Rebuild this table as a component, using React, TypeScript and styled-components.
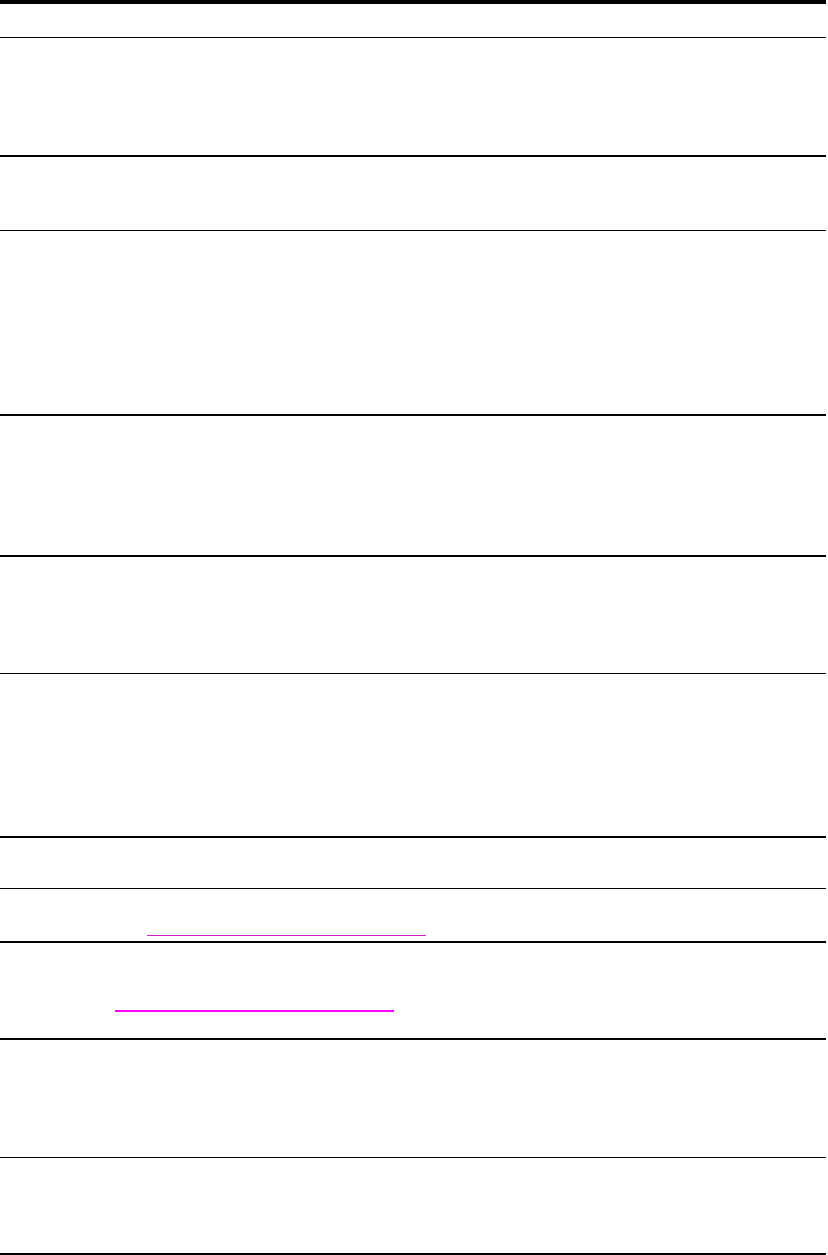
import styled, { createGlobalStyle } from 'styled-components';

const GlobalStyle = createGlobalStyle`
  html, body {
    margin: 0;
    padding: 0;
    background: #ffffff;
    font-family: "Liberation Sans", Arial, sans-serif;
  }
`;

const Sheet = styled.div`
  width: 826px;
  display: flex;
  flex-direction: column;
  border-top: 4px solid #000000;
`;

const Row = styled.div<{ $height: number; $rule: number }>`
  height: ${({ $height }) => $height}px;
  border-bottom: ${({ $rule }) => $rule}px solid #000000;
  display: flex;
  flex-direction: column;
  justify-content: flex-end;
`;

const LinkLine = styled.span<{ $indent: number; $width: number; $weight: number; $color: string; $gap: number }>`
  display: block;
  margin-left: ${({ $indent }) => $indent}px;
  width: ${({ $width }) => $width}px;
  height: 0;
  border-bottom: ${({ $weight }) => $weight}px solid ${({ $color }) => $color};
  margin-bottom: ${({ $gap }) => $gap}px;
`;

const rows = [
  { height: 33, rule: 1 },
  { height: 117, rule: 2 },
  { height: 73, rule: 1 },
  { height: 183, rule: 2 },
  { height: 139, rule: 2 },
  { height: 116, rule: 1 },
  { height: 162, rule: 2 },
  { height: 50, rule: 1 },
  { height: 52, rule: 2, link: { indent: 147, width: 279, weight: 1, color: '#cc22cc', gap: 5 } },
  { height: 95, rule: 2, link: { indent: 115, width: 279, weight: 2, color: '#ff00ff', gap: 26 } },
  { height: 117, rule: 1 },
  { height: 95, rule: 2 },
];

export default function App() {
  return (
    <>
      <GlobalStyle />
      <Sheet>
        {rows.map((r, i) => (
          <Row key={i} $height={r.height} $rule={r.rule}>
            {r.link && (
              <LinkLine
                $indent={r.link.indent}
                $width={r.link.width}
                $weight={r.link.weight}
                $color={r.link.color}
                $gap={r.link.gap}
              />
            )}
          </Row>
        ))}
      </Sheet>
    </>
  );
}
